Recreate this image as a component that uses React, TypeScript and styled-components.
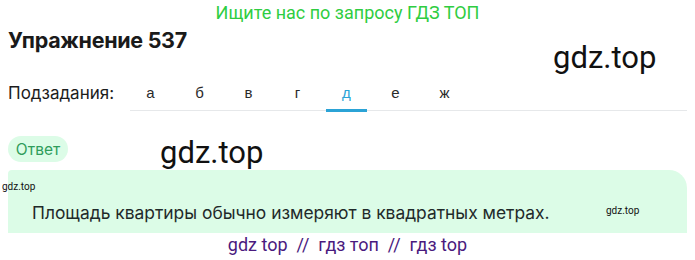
import React, { useState } from "react";
import styled, { createGlobalStyle } from "styled-components";

const GlobalStyle = createGlobalStyle`
  html, body {
    margin: 0;
    padding: 0;
    background: #ffffff;
  }
  body {
    font-family: Inter, "Noto Sans", sans-serif;
    color: #1c1c1c;
  }
`;

const Page = styled.div`
  position: relative;
  width: 695px;
  height: 260px;
  overflow: hidden;
  padding: 0 8px;
  box-sizing: border-box;
`;

const Banner = styled.div`
  text-align: center;
  font-family: Roboto, sans-serif;
  font-size: 18px;
  line-height: 24px;
  color: #2fcd41;
  padding-top: 1px;
`;

const Title = styled.h1`
  margin: 1px 0 0;
  font-family: Inter, sans-serif;
  font-size: 21.5px;
  line-height: 28px;
  font-weight: 700;
  letter-spacing: -0.3px;
  color: #1a1a1a;
`;

const SubRow = styled.div`
  display: flex;
  align-items: stretch;
  margin-top: 24px;
  height: 33px;
`;

const SubLabel = styled.div`
  font-family: Inter, sans-serif;
  font-size: 17px;
  color: #1c1c1c;
  width: 122px;
  display: flex;
  align-items: center;
  padding-bottom: 3px;
`;

const Tabs = styled.div`
  flex: 1;
  display: flex;
  gap: 8px;
  border-bottom: 1px solid #e6e8ea;
`;

const Tab = styled.button<{ $active?: boolean }>`
  width: 41px;
  border: none;
  background: none;
  padding: 0 0 3px;
  font-family: "Liberation Sans", Arial, sans-serif;
  font-size: 15px;
  color: ${(p) => (p.$active ? "#2ba3d6" : "#2a2a2a")};
  border-bottom: 3px solid ${(p) => (p.$active ? "#2ba3d6" : "transparent")};
  margin-bottom: -2px;
  cursor: pointer;
`;

const Pill = styled.div`
  display: flex;
  align-items: center;
  justify-content: center;
  margin-top: 25px;
  width: 60px;
  height: 26px;
  border-radius: 13px;
  background: #dcfce7;
  color: #2f9d5b;
  font-family: Inter, sans-serif;
  font-size: 15.5px;
`;

const AnswerBox = styled.div`
  margin-top: 8px;
  height: 63px;
  background: #dcfce7;
  border-radius: 4px 18px 0 0;
  padding: 32px 0 0 24px;
  box-sizing: border-box;
  font-family: Inter, sans-serif;
  font-size: 17.4px;
  line-height: 22px;
  color: #1f2a2a;
`;

const Footer = styled.div`
  text-align: center;
  font-family: Roboto, sans-serif;
  font-size: 18px;
  line-height: 22px;
  color: #4a1a7e;
  margin-top: 1px;
`;

const Mark = styled.span<{ $size: number; $x: number; $y: number }>`
  position: absolute;
  left: ${(p) => p.$x}px;
  top: ${(p) => p.$y}px;
  font-family: Roboto, Arial, sans-serif;
  font-size: ${(p) => p.$size}px;
  line-height: 1;
  color: #111;
  pointer-events: none;
`;

const letters = ["а", "б", "в", "г", "д", "е", "ж"];

export default function App() {
  const [active, setActive] = useState(4);
  return (
    <>
      <GlobalStyle />
      <Page>
        <Banner>Ищите нас по запросу ГДЗ ТОП</Banner>
        <Title>Упражнение 537</Title>
        <SubRow>
          <SubLabel>Подзадания:</SubLabel>
          <Tabs>
            {letters.map((l, i) => (
              <Tab key={l} $active={i === active} onClick={() => setActive(i)}>
                {l}
              </Tab>
            ))}
          </Tabs>
        </SubRow>
        <Pill>Ответ</Pill>
        <AnswerBox>Площадь квартиры обычно измеряют в квадратных метрах.</AnswerBox>
        <Footer>gdz top&nbsp; //&nbsp; гдз топ&nbsp; //&nbsp; гдз top</Footer>
        <Mark $size={31} $x={553} $y={42}>gdz.top</Mark>
        <Mark $size={31} $x={160} $y={137}>gdz.top</Mark>
        <Mark $size={10} $x={2} $y={182}>gdz.top</Mark>
        <Mark $size={10} $x={606} $y={206}>gdz.top</Mark>
      </Page>
    </>
  );
}
